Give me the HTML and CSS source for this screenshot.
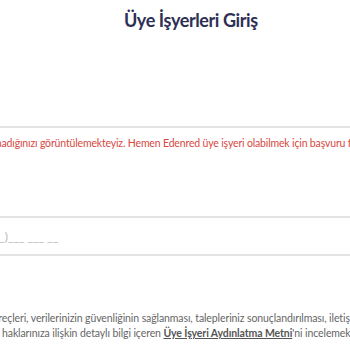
FILE: index.html
```html
<!DOCTYPE html>
<html lang="tr">
<head>
    <meta charset="UTF-8">
    <meta name="viewport" content="width=device-width, initial-scale=1.0">
    <title>Üye İşyerleri Giriş</title>
    <link rel="stylesheet" href="styles.css">
</head>
<body>
    <div class="page">
        <h1 class="title">Üye İşyerleri Giriş</h1>
        <div class="divider"></div>
        <p class="alert">Edenred üye işyeri olmadığınızı görüntülemekteyiz. Hemen Edenred üye işyeri olabilmek için başvuru formunu doldurabilirsiniz.</p>
        <div class="field">
            <span class="mask">(___)___ ___ __</span>
        </div>
        <div class="notice">
            <div class="line first">Kişisel verilerinizin işlenme süreçleri, verilerinizin güvenliğinin sağlanması, talepleriniz sonuçlandırılması, iletişim</div>
            <div class="line second">haklarınıza ilişkin detaylı bilgi içeren <a href="#">Üye İşyeri Aydınlatma Metni</a>'ni incelemek için tıklayınız.</div>
        </div>
    </div>
</body>
</html>
```

FILE: styles.css
```css
body {
    margin: 0;
    overflow: hidden;
    background: #fff;
    font-family: Lato, "Noto Sans", sans-serif;
}

.page {
    width: 350px;
    padding-top: 8px;
}

.title {
    margin: 0 0 0 124px;
    font-size: 18px;
    font-weight: 700;
    letter-spacing: -0.4px;
    line-height: 24px;
    color: #2d2f55;
    white-space: nowrap;
}

.divider {
    margin-top: 94px;
    border-top: 2px solid #e3e3e3;
}

.alert {
    margin: 7px 0 0 -99px;
    font-size: 10.5px;
    letter-spacing: -0.16px;
    line-height: 16px;
    color: #d6483f;
    white-space: nowrap;
}

.field {
    margin-top: 65px;
    height: 36px;
    border-top: 2px solid #e3e3e3;
    border-bottom: 2px solid #e3e3e3;
    display: flex;
    align-items: center;
}

.mask {
    margin-left: -15px;
    font-size: 12px;
    color: #b5b5b5;
}

.notice {
    margin-top: 55px;
    font-size: 10.5px;
    letter-spacing: -0.1px;
    line-height: 15px;
    color: #666;
}

.line {
    white-space: nowrap;
}

.first {
    margin-left: -134px;
}

.second {
    margin-left: 2px;
}

.notice a {
    color: #555;
    font-weight: 700;
    text-decoration: underline;
}
```
